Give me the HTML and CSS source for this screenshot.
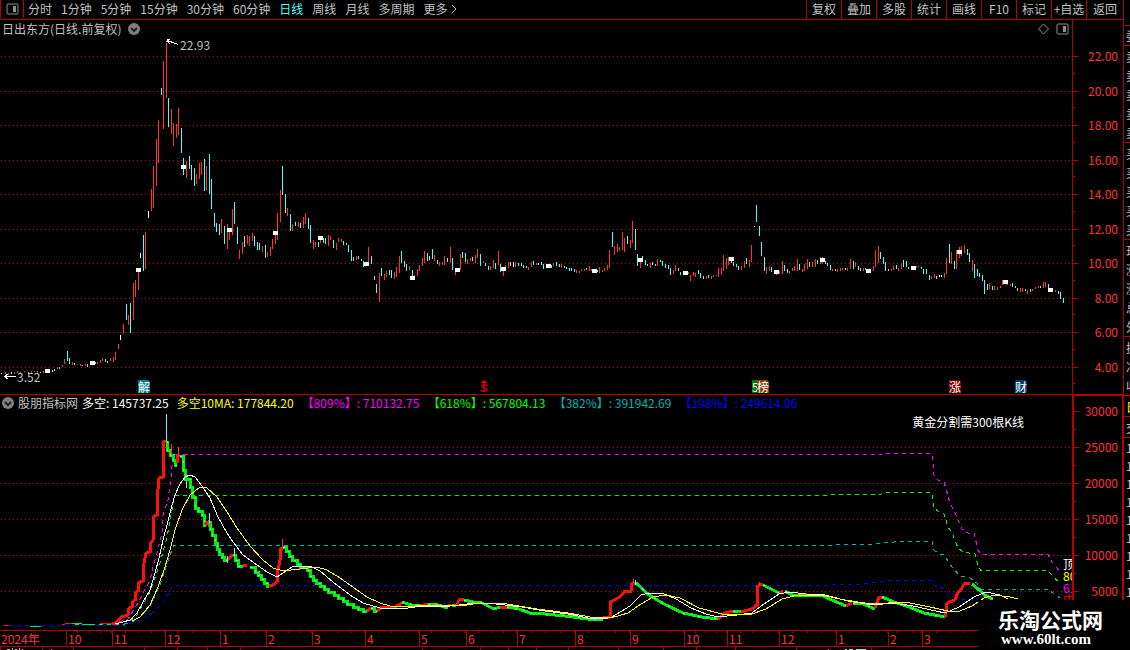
FILE: index.html
```
<!DOCTYPE html>
<html lang="zh-CN">

<head>
    <meta charset="utf-8">
    <title>日出东方 日线</title>
    <meta name="viewport" content="width=device-width, initial-scale=1.0">
    <link rel="stylesheet" href="styles.css">
</head>

<body>
    <div class="terminal">
        <main class="main">
            <header class="toolbar">
                <button class="layout-button" aria-label="布局">
                    <svg class="icon" viewBox="0 0 13 12">
                        <rect x="1" y="1" width="11" height="10" rx="1" />
                        <path class="solid" d="M7 3h3v6H7z" />
                    </svg>
                </button>
                <nav class="periods">
                    <button>分时</button>
                    <button>1分钟</button>
                    <button>5分钟</button>
                    <button>15分钟</button>
                    <button>30分钟</button>
                    <button>60分钟</button>
                    <button class="active">日线</button>
                    <button>周线</button>
                    <button>月线</button>
                    <button>多周期</button>
                    <button class="more">更多
                        <svg class="more-arrow" viewBox="0 0 6 10">
                            <path d="M1 1l4 4-4 4" />
                        </svg>
                    </button>
                </nav>
                <div class="tools">
                    <button>复权</button>
                    <button>叠加</button>
                    <button>多股</button>
                    <button>统计</button>
                    <button>画线</button>
                    <button>F10</button>
                    <button>标记</button>
                    <button>+自选</button>
                    <button>返回</button>
                </div>
            </header>

            <!-- Daily price -->
            <section class="panel price">
                <div class="plot">
                    <svg class="chart" viewBox="0 20 1072 374" preserveAspectRatio="none">
                        <path class="grid" d="M1 56.5H1072M1 91.5H1072M1 125.5H1072M1 160.5H1072M1 194.5H1072M1 229.5H1072M1 263.5H1072M1 298.5H1072M1 332.5H1072M1 367.5H1072" />
                        <g transform="translate(.5 0)">
                            <path class="up" d="M5 372V374M8 373V375M14 372V374M17 371V373M20 372V374M24 371V372M31 371V373M34 371V372M37 371V373M43 371V373M57 367V369M62 365V367M64 359V364M72 362V365M77 364V365M80 364V366M85 364V366M97 362V364M100 360V363M102 358V361M110 358V361M113 357V362M115 352V360M118 344V349M123 324V333M128 315V325M133 283V320M135 280V297M138 270V290M145 232V269M151 189V211M153 166V208M156 139V186M158 120V163M163 61V129M166 43V98M171 109V134M173 123V146M176 124V138M178 108V135M186 161V178M196 174V184M199 163V179M201 162V175M206 166V190M221 219V233M227 224V249M229 228V240M232 209V235M239 250V259M242 242V254M247 235V244M249 236V246M252 233V241M262 246V252M267 252V257M270 247V256M272 239V249M275 235V244M277 213V240M280 190V222M287 208V216M292 224V231M298 222V227M303 217V228M305 213V224M313 240V249M315 242V247
                            M320 240V243M328 235V246M330 236V240M336 243V250M338 238V242M341 239V242M356 256V260M368 247V262M379 273V302M384 274V280M386 271V277M394 272V279M396 267V277M399 256V273M409 266V270M414 275V276M417 269V276M419 265V271M422 258V266M424 251V263M434 255V261M439 262V266M442 262V265M444 256V265M450 247V263M455 272V275M460 254V270M467 259V264M470 258V261M475 255V263M477 249V258M483 261V263M490 266V270M493 260V268M498 251V265M503 270V276M505 265V267M508 262V268M515 262V267M528 267V270M531 262V267M536 263V265M553 263V266M561 264V268M576 270V273M579 271V273
                            M581 269V271M584 269V271M589 266V271M591 269V271M599 267V273M602 270V272M604 268V271M607 265V270M609 250V268M614 246V255M617 244V252M619 247V251M622 232V250M624 238V252M630 240V248M632 221V243M640 262V268M650 263V268M657 259V266M673 270V274M675 265V271M688 272V274M690 275V281M693 272V276M695 273V277M706 276V279M711 276V279M713 275V277M716 275V276M718 268V277M721 268V275M723 255V271M726 258V269M728 257V265M741 266V270M744 261V268M749 260V267M751 245V262M766 267V274M769 266V271M776 274V275M779 271V274M782 261V274M789 271V274M792 268V271M794 266V271M797 259V271M802 269V272M804 264V271M807 259V269M812 262V267M815 259V267M820 257V264M822 257V264
                            M832 269V271M837 269V272M840 268V271M842 268V270M847 268V271M850 259V269M855 262V267M863 268V271M873 266V271M875 250V267M878 246V263M891 269V271M893 266V270M898 268V271M901 263V269M916 266V268M918 266V267M931 276V279M934 274V278M944 273V278M946 258V274M951 252V264M956 250V269M959 247V258M961 246V256M964 245V253M972 260V271M989 283V289M994 286V290M997 287V290M1000 286V288M1002 280V285M1007 284V285M1010 284V286M1020 288V292M1022 288V292M1027 290V294M1032 289V291M1035 287V289M1038 286V288M1043 282V288M1045 282V287M1055 290V292" />
                            <path class="down" d="M1 373V374M11 372V374M28 372V374M40 372V373M52 370V372M54 369V371M59 367V369M67 351V361M69 358V364M74 363V365M82 365V366M87 364V367M95 362V364M105 359V362M107 361V363M126 304V320M130 303V333M143 235V271M161 88V95M168 98V127M181 128V153M183 158V175M189 156V169M191 165V180M194 168V186M204 159V191M209 154V194M211 179V209M214 213V227M216 223V232M219 224V235M224 226V244M234 202V224M237 227V244M244 236V247M254 236V246M257 242V250M259 243V250M265 245V258M282 166V195M285 194V213M290 214V231M295 222V226M300 223V228M308 218V229M310 225V243M318 242V247
                            M323 238V243M325 238V244M333 240V248M343 241V245M346 243V245M348 245V252M351 250V261M353 257V261M358 256V259M361 259V261M363 261V267M371 256V264M374 276V280M376 284V293M381 268V276M389 270V275M391 270V278M401 251V263M404 261V267M406 264V271M412 270V276M427 253V261M429 256V260M432 249V259M437 260V264M447 258V262M452 258V270M462 252V258M465 253V262M472 257V261M480 254V266M485 263V266M488 266V270M495 263V269M500 264V272M510 262V266M518 263V266M521 263V266M523 265V268M526 266V268M533 261V265M541 262V265M543 264V269M551 265V268M556 262V266M559 264V267M564 266V268M566 267V269M569 268V271M571 268V271M574 269V272
                            M586 268V270M597 270V272M612 232V247M627 236V244M635 229V250M637 254V266M642 256V258M645 260V265M647 264V266M652 262V265M655 264V266M660 260V262M662 261V266M665 264V268M668 265V269M670 268V275M678 268V271M680 272V275M698 270V274M700 273V278M703 276V279M708 275V278M731 261V263M733 262V266M736 264V267M738 266V270M746 258V264M756 205V222M759 226V236M761 242V256M764 257V271M771 267V272M784 265V271M787 269V273M799 264V270M809 262V267M817 260V264M825 261V264M827 263V266
                            M830 265V270M835 269V271M845 268V270M853 261V269M858 266V270M860 268V271M865 268V270M880 252V259M883 257V264M885 262V271M888 269V271M896 265V269M903 260V267M906 261V267M908 267V269M921 267V269M923 269V274M926 269V274M929 275V280M936 276V279M949 244V263M954 261V269M967 249V255M969 253V262M974 264V278M977 269V276M979 273V277M982 275V281M984 280V294M987 284V290M992 286V290M1012 283V287M1015 286V288M1017 288V291M1025 289V291M1030 289V292M1040 286V288M1048 284V288M1058 291V294M1060 292V299M1063 298V303" />
                            <path class="flat" d="M120 335V340M140 253V258M148 211V218M513 262V267M538 263V265M754 226V227M939 275V277M941 275V277" />
                        </g>
                        <path class="marker" d="M45 369h5v4h-5zM90 361h5v4h-5zM136 268h5v4h-5zM181 165h5v4h-5zM227 228h5v4h-5zM273 231h5v4h-5zM318 236h5v4h-5zM364 262h5v4h-5zM410 276h5v4h-5zM455 268h5v4h-5zM501 267h5v4h-5zM546 264h5v4h-5zM592 269h5v4h-5zM638 258h5v4h-5zM683 271h5v4h-5zM729 257h5v4h-5zM774 270h5v4h-5zM820 258h5v4h-5zM866 269h5v4h-5zM911 266h5v4h-5zM957 250h5v4h-5zM1003 280h5v4h-5zM1048 288h5v4h-5z" />
                        <path class="pointer" d="M170 39.500H167.500L166.500 42M167 40.500L173 42.500L178 44.500M167 41L170 44M4 376.500H16M4 376.500L8 374M4 376.500L8 379" />
                    </svg>
                    <div class="panel-head">
                        <h1>日出东方(日线.前复权)</h1>
                        <button class="round-button" aria-label="展开">
                            <svg class="chevron" viewBox="0 0 12 12">
                                <circle cx="6" cy="6" r="6" />
                                <path d="M3 5l3 3 3-3" />
                            </svg>
                        </button>
                        <div class="panel-actions">
                            <svg class="icon" viewBox="0 0 13 12">
                                <path d="M6.500 1l5 5-5 5-5-5z" />
                            </svg>
                            <svg class="icon" viewBox="0 0 13 12">
                                <rect x="1" y="1" width="11" height="10" rx="1" />
                                <path class="solid" d="M7 3h3v6H7z" />
                            </svg>
                        </div>
                    </div>
                    <span class="note high">22.93</span>
                    <span class="note low">3.52</span>
                    <span class="badge teal" style="left: 12.87%">解</span>
                    <span class="badge signal" style="left: 44.78%">
                        <svg viewBox="0 0 8 12">
                            <path class="tip" d="M4 0l3 3H1z" />
                            <path d="M7 6V5H2v2l5 2v2H1v-1M4 3v9" />
                        </svg>
                    </span>
                    <span class="badge brown" style="left: 70.15%"><i>5</i>榜</span>
                    <span class="badge red" style="left: 88.53%">涨</span>
                    <span class="badge navy" style="left: 94.68%">财</span>
                </div>
                <ol class="axis">
                    <li>22.00</li>
                    <li>20.00</li>
                    <li>18.00</li>
                    <li>16.00</li>
                    <li>14.00</li>
                    <li>12.00</li>
                    <li>10.00</li>
                    <li>8.00</li>
                    <li>6.00</li>
                    <li>4.00</li>
                </ol>
            </section>

            <!-- Indicator -->
            <section class="panel indicator">
                <div class="plot">
                    <svg class="chart" viewBox="0 395 1072 235" preserveAspectRatio="none">
                        <path class="grid" d="M1 447.500H1072M1 483.500H1072M1 519.500H1072M1 555.500H1072M1 591.500H1072" />
                        <path class="level magenta" d="M119 622L128 619L138 603L143 593L150 580L153 567L157 553L162 533L163 515L168 500L171 477L173 455V454.500H880L884 453.500H932L933 462L934 475L938 480L944 482L950 503L955 513L962 529L968 533H974L978 550L981 554.500H1048L1052 562L1061 573" />
                        <path class="level green" d="M75 624.500H124L130 621L137 615L150 592L160 563L167 537L172 510L174 495.500H828L832 494.500H880L884 492.500H932L934 508L939 512L944 514L948 527L953 535L958 548L963 552L975 554L978 566L981 570.500H1048L1060 584" />
                        <path class="level teal" d="M124 624L132 622L140 617L150 606L160 585L170 555L174 545.500H830L834 544.500H872L883 543L900 541.500H932L934 550L939 554L944 555L952 567L960 576L970 578L977 583L981 589.500H1048L1060 598" />
                        <path class="level blue" d="M9 625.500H125L140 620L152 613L165 600L173 585.500H828L832 584.500H858L880 582L888 580.500H932L934 585L943 588L951 595L960 599L978 600" />
                        <path class="trend-up thin" d="M3 625.500H9M62 624.500L68 623.500H73M100 623.500H113" />
                        <path class="trend-down thin" d="M30 626.500H41M72 623.500H82M82 624.500H92" />
                        <path class="trend-up" d="M112 624L116 623L119 620L121 617L128 615L129 608L132 607V602L135 600V593L138 591V583L143 581V572L144 563L146 553L150 552V543L153 541L154 516L157 515V500L159 478L163 477V473L164 441H167" />
                        <g class="trend-down">
                            <path id="fall" d="M167 441V450H170V455H173V460H175V465H177M180 456H183V470H185V479H190V487H192V497H195V508H198V511H202V515H204V525H206M208 522H210V529H212V535H215V543H217V549H219V554H222V557H224V560H227M233 555H235V560H238V566H243M250 567H255V572H258V575H261V579H264V583H267V586H269M283 547H286V551H289V556H292V560H297V564H300V567H307V570H310V576H313V580H316V583H320V586H324V589H328V592H334V595H338V598H343V601H347V604H353V607H358V609H363V611H367M371 608H374V611H377M402 602L408 604L415 606L420 605M428 604L438 605L448 608M452 605L456 606M464 600L473 602L482 603L488 606L494 609L500 607M507 607L519 609L530 613L545 614L565 616L588 619H603M636 583L649 595L664 604L683 613L702 617L718 619M733 611L741 612M763 585L767 587L779 593M785 591L794 596L805 595L821 595L832 600L846 606M853 603L863 604L875 609M882 597L894 602L909 607L924 613L945 617M972 584L978 589L986 596L993 599" />
                        </g>
                        <use class="specks" href="#fall" />
                        <path class="trend-up" d="M177 463L178 455H180M205 525L208 522M227 560L233 555M243 565L247 566M269 586L273 585L277 582L278 570L280 560L281 548H283M367 611L371 608M377 611L382 607L395 607L402 603M420 606L428 604M448 607L450 604M456 606L459 600L464 599M500 608L507 607M603 618L610 617V603L612 601L620 597L625 591H631L632 583H636M718 619L725 613L733 611M741 612L752 609L757 605V587L761 584H763M779 593L783 591M846 606L852 603M875 608L879 597H882M945 617L947 603L955 600L958 592L961 590L964 584L970 583" />
                        <path class="up wick" d="M171.500 444V455M178.500 447V456M282.500 539V547M633.500 579V583M759.500 582V586M208.500 520V527" />
                        <path class="down wick" d="M166.500 414V441M186.500 480V488M209.500 513V523M227.500 556V563M234.500 548V555M635.500 580V585" />
                        <polyline class="ma white" points="115,624 123,622 130,620 137,613 143,602 150,590 155,573 159,558 163,540 167,525 172,505 175,495 180,484 185,477 190,475 195,477 202,486 210,498 218,517 227,533 233,542 243,555 257,565 267,572 277,577 283,573 292,567 300,566 310,566 320,571 333,582 350,595 363,603 380,608 400,609 423,606 450,606 476,603 496,604 522,607 545,611 568,614 588,618 603,619 612,617 630,606 641,595 649,593 664,594 676,599 691,608 706,614 718,617 737,615 752,613 764,604 779,594 790,592 806,594 825,595 848,601 873,605 894,603 913,606 945,613 959,607 974,597 986,592 1000,595 1008,599" />
                        <polyline class="ma yellow" points="132,621 140,617 150,605 158,587 165,567 170,550 175,530 182,510 190,495 200,487 207,488 217,497 227,512 237,528 250,546 263,560 273,568 283,571 300,569 317,567 327,570 340,578 350,585 367,597 380,603 390,606 400,607 430,605 460,606 480,603 507,604 537,609 568,613 590,617 611,618 628,613 641,604 653,597 666,595 680,598 699,608 722,614 752,614 766,609 782,599 798,595 821,595 845,600 871,604 905,602 930,607 948,611 960,611 972,606 984,598 994,595 1010,597 1018,599" />
                    </svg>
                    <div class="panel-head">
                        <button class="round-button" aria-label="展开">
                            <svg class="chevron" viewBox="0 0 12 12">
                                <circle cx="6" cy="6" r="6" />
                                <path d="M3 5l3 3 3-3" />
                            </svg>
                        </button>
                        <h2>股朋指标网</h2>
                        <span class="reading white">多空: 145737.25</span>
                        <span class="reading yellow">多空10MA: 177844.20</span>
                        <span class="reading ratio magenta">【809%】: 710132.75</span>
                        <span class="reading ratio green">【618%】: 567804.13</span>
                        <span class="reading ratio teal">【382%】: 391942.69</span>
                        <span class="reading ratio blue">【198%】: 249614.06</span>
                    </div>
                    <span class="note hint">黄金分割需300根K线</span>
                    <div class="edge-labels">
                        <span class="white">顶</span>
                        <span class="yellow">80</span>
                        <span class="magenta">61</span>
                        <span class="red">中</span>
                    </div>
                </div>
                <ol class="axis">
                    <li>30000</li>
                    <li>25000</li>
                    <li>20000</li>
                    <li>15000</li>
                    <li>10000</li>
                    <li>5000</li>
                </ol>
            </section>

            <ol class="timeline">
                <li>2024年</li>
                <li>10</li>
                <li>11</li>
                <li>12</li>
                <li>1</li>
                <li>2</li>
                <li>3</li>
                <li>4</li>
                <li>5</li>
                <li>6</li>
                <li>7</li>
                <li>8</li>
                <li>9</li>
                <li>10</li>
                <li>11</li>
                <li>12</li>
                <li>1</li>
                <li>2</li>
                <li>3</li>
            </ol>
            <svg class="tabs-edge" viewBox="0 0 1123 3" preserveAspectRatio="none">
                <path class="edge" d="M0 0h1v3h-1zM42 0h1v3h-1zM73 0h1v3h-1zM144 0h1v3h-1zM177 0h1v3h-1zM207 0h1v3h-1zM240 0h1v3h-1zM422 0h1v3h-1zM480 0h1v3h-1zM508 0h1v3h-1zM536 0h1v3h-1zM568 0h1v3h-1zM618 0h1v3h-1zM663 0h1v3h-1zM696 0h1v3h-1zM735 0h1v3h-1zM796 0h1v3h-1zM871 0h1v3h-1z" />
                <path class="grey" d="M7 2h3v1h-3zM12 1h1v2h-1zM15 2h2v1h-2zM19 1h1v2h-1zM22 2h1v1h-1zM51 2h1v1h-1zM828 2h1v1h-1z" />
                <path class="cyan" d="M845 2h2v1h-2zM849 2h4v1h-4zM856 2h10v1h-10z" />
            </svg>
        </main>

        <!-- Quote panel, cut by the window edge -->
        <aside class="quotes">
            <ul class="blank"></ul>
            <ul><li>委</li></ul>
            <ul><li>卖</li><li>卖</li><li>卖</li><li>卖</li><li>卖</li></ul>
            <ul><li>买</li><li>买</li><li>买</li><li>买</li><li>买</li></ul>
            <ul><li>现</li><li>涨</li><li>涨</li><li>总</li><li>外</li></ul>
            <ul><li>换</li><li>净</li><li>收</li></ul>
            <ul class="yellow"><li>日</li></ul>
            <ul><li>交</li></ul>
            <ul class="ticks"><li>1</li><li>1</li><li>1</li><li>1</li><li>1</li><li>1</li><li>1</li><li>1</li><li>1</li></ul>
        </aside>

        <div class="site-mark">
            <strong>乐淘公式网</strong>
            <a href="#">www.60lt.com</a>
        </div>
    </div>
</body>

</html>
```
FILE: styles.css
```
:root {
    --line: #b40000;
    --grid: #b01010;
    --up: #ff3232;
    --down: #54fcfc;
    --text: #c0c0c0;
}

* {
    box-sizing: border-box;
}

body {
    margin: 0;
    background: #000;
    color: var(--text);
    font-family: "Noto Sans CJK SC", sans-serif;
    font-size: 12px;
    line-height: 16px;
}

button {
    padding: 0;
    border: none;
    background: none;
    color: inherit;
    font: inherit;
    white-space: nowrap;
    cursor: pointer;
}

h1,
h2,
ol,
ul {
    margin: 0;
    padding: 0;
    font-size: 12px;
    font-weight: 400;
    list-style: none;
    white-space: nowrap;
}

.terminal {
    position: relative;
    display: grid;
    grid-template-columns: minmax(0, 1fr) 7px;
    height: 100vh;
    overflow: hidden;
}

.main {
    display: flex;
    flex-direction: column;
    min-width: 0;
    min-height: 0;
}

/* -- Toolbar -- */
.toolbar {
    display: flex;
    height: 20px;
    padding-bottom: 1px;
    border-bottom: 1px solid var(--line);
}

.layout-button {
    display: flex;
    align-items: center;
    justify-content: center;
    width: 24px;
    border-left: 1px solid var(--line);
    border-right: 1px solid var(--line);
}

.icon {
    width: 13px;
    height: 12px;
    fill: none;
    stroke: #909090;
}

.icon .solid {
    fill: #909090;
    stroke: none;
}

.periods {
    display: flex;
    flex: 1;
    gap: 9px;
    padding-left: 4px;
}

.periods .active {
    color: var(--down);
}

.more {
    display: flex;
    align-items: center;
    gap: 4px;
}

.more-arrow {
    width: 6px;
    height: 10px;
    fill: none;
    stroke: var(--text);
}

.tools {
    display: flex;
    margin-bottom: -1px;
}

.tools button {
    width: 35px;
    padding-bottom: 1px;
    border-left: 1px solid var(--line);
}

.tools button:last-child {
    width: 37px;
}

/* -- Panels -- */
.panel {
    display: grid;
    grid-template-columns: minmax(0, 1fr) 51px;
    min-height: 0;
}

.price {
    flex: 374 1 0;
}

.indicator {
    flex: 235 1 0;
    border-top: 1px solid var(--line);
}

.plot {
    position: relative;
    overflow: hidden;
}

.chart {
    position: absolute;
    inset: 0;
    width: 100%;
    height: 100%;
    fill: none;
    shape-rendering: crispEdges;
}

.panel-head {
    position: relative;
    display: flex;
    align-items: center;
    gap: 7px;
    height: 18px;
    padding: 0 3px 0 2px;
    white-space: nowrap;
}

.panel-actions {
    display: flex;
    gap: 6px;
    margin-left: auto;
}

.round-button {
    display: flex;
}

.chevron {
    width: 12px;
    height: 12px;
    fill: #808080;
}

.chevron path {
    fill: none;
    stroke: #202020;
    stroke-width: 2;
}

.indicator .panel-head {
    gap: 4px;
    height: 16px;
}

.reading {
    margin-right: 4px;
}

.ratio {
    width: 118px;
}

/* -- Chart strokes -- */
.grid {
    stroke: var(--grid);
    stroke-dasharray: 1 3;
}

.up {
    stroke: var(--up);
}

.down {
    stroke: var(--down);
}

.flat,
.pointer {
    stroke: #fff;
}

.marker {
    fill: #fff;
}

.level {
    stroke: currentColor;
    stroke-dasharray: 4 4;
}

.trend-up {
    stroke: #ff1010;
    stroke-width: 3;
}

.trend-down {
    stroke: #00f000;
    stroke-width: 3;
}

.thin {
    stroke-width: 1;
}

.specks {
    stroke: var(--down);
    stroke-dasharray: 2 6;
}

.ma {
    stroke: currentColor;
}

.white {
    color: #fff;
}

.yellow {
    color: #ff0;
}

.magenta {
    color: #f0f;
}

.green {
    color: #0f0;
}

.teal {
    color: #00b4b4;
}

.blue {
    color: #00f;
}

/* -- Labels over the charts -- */
.note {
    position: absolute;
    white-space: nowrap;
}

.high {
    top: 17px;
    left: 16.8%;
}

.low {
    bottom: 9px;
    left: 17px;
}

.hint {
    top: 19px;
    left: 85.1%;
    color: #fff;
}

.badge {
    position: absolute;
    bottom: 1px;
    display: flex;
    height: 13px;
    border-radius: 1px 3px 0 0;
    color: #fff;
    line-height: 13px;
}

.badge.teal {
    background: #008080;
    color: #fff;
}

.badge.brown {
    background: #804000;
}

.badge.brown i {
    width: 5px;
    overflow: hidden;
    background: #008000;
    font-style: normal;
}

.badge.red {
    background: #800000;
}

.badge.navy {
    background: #003c78;
}

.signal svg {
    width: 8px;
    height: 12px;
    fill: none;
    stroke: #f00;
}

.signal .tip {
    fill: #f00;
    stroke: none;
}

.edge-labels {
    position: absolute;
    right: 0;
    bottom: 24px;
    display: flex;
    flex-direction: column;
    width: 9px;
    overflow: hidden;
    line-height: 12px;
    white-space: nowrap;
}

.edge-labels .red {
    color: #f00;
}

/* -- Value axis -- */
.axis {
    display: flex;
    flex-direction: column;
    border-left: 1px solid var(--line);
    color: var(--up);
    line-height: 12px;
    text-align: right;
}

.axis li {
    position: relative;
    padding-right: 5px;
}

.axis li::before,
.axis li::after {
    content: "";
    position: absolute;
    left: 0;
    width: 5px;
    height: 1px;
    background: var(--line);
}

.axis li::before {
    top: 50%;
}

.axis li::after {
    width: 2px;
}

.price .axis {
    padding: 19px 0 10px;
}

.price .axis li {
    display: flex;
    flex: 1;
    align-items: center;
    justify-content: flex-end;
}

.price .axis li::after {
    bottom: 0;
}

.indicator .axis {
    justify-content: space-between;
    padding: 9px 0 33px;
    border-top: 1px solid var(--line);
    border-right: 1px solid var(--line);
    border-left-width: 2px;
}

.indicator .axis li {
    padding-right: 4px;
}

.indicator .axis li::after {
    top: 24px;
}

/* -- Time axis -- */
.timeline {
    display: grid;
    grid-template-columns: 66fr 46fr 53fr 55fr 46fr 46fr 53fr 54fr 47fr 51fr 58fr 55fr 54fr 43fr 52fr 57fr 52fr 34fr 201fr;
    height: 17px;
    border-top: 1px solid var(--line);
    border-bottom: 1px solid var(--line);
    color: var(--up);
    line-height: 15px;
}

.timeline li {
    min-width: 0;
    padding-left: 1px;
    border-left: 1px solid var(--line);
    background: repeating-linear-gradient(to right, transparent 0 calc(25% - 1px), var(--line) calc(25% - 1px) 25%) 0 0 / 100% 2px no-repeat;
}

.timeline li:first-child {
    border-left: none;
    background: none;
}

.timeline li:last-child {
    background-image: repeating-linear-gradient(to right, transparent 0 13px, var(--line) 13px 14px);
}

.tabs-edge {
    width: 100%;
    height: 3px;
}

.edge {
    fill: var(--line);
}

.grey {
    fill: var(--text);
}

.cyan {
    fill: var(--down);
}

/* -- Quote strip -- */
.quotes {
    border-left: 1px solid var(--line);
    overflow: hidden;
}

.quotes ul {
    padding: 1px 0 0 2px;
    border-bottom: 1px solid var(--line);
    line-height: 19px;
}

.quotes .blank {
    height: 26px;
}

.quotes ul:nth-child(2) {
    padding-top: 0;
}

.quotes .ticks {
    border-bottom: none;
    line-height: 18px;
}

/* -- Site mark -- */
.site-mark {
    position: absolute;
    right: 0;
    bottom: 0;
    display: flex;
    flex-direction: column;
    width: 152px;
    height: 50px;
    padding: 8px 0 0 20px;
    background: #000;
    color: #fff;
}

.site-mark strong {
    font-size: 21px;
    line-height: 22px;
}

.site-mark a {
    padding-left: 3px;
    color: #fff;
    font: bold 15px/18px "Liberation Serif", serif;
    text-decoration: none;
}
```
